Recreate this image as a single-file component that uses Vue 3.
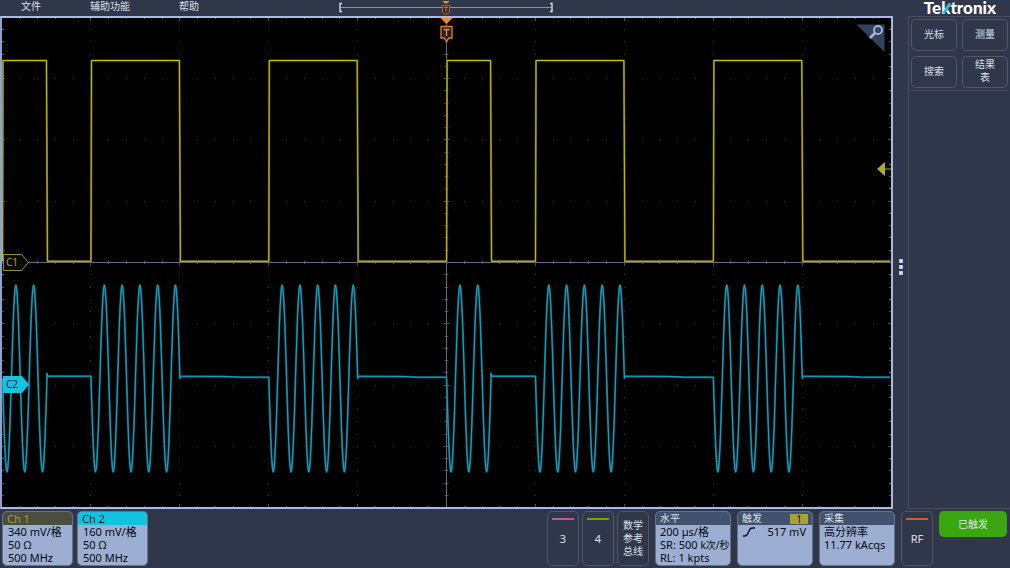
<script setup>
const DIV_X = 88.9
const DIV_Y = 61.3
const CX = 444.5
const CY = 244.5

const bursts = [
  { start: 0.5, cycles: 2.5 },
  { start: 89, cycles: 5 },
  { start: 266.8, cycles: 5 },
  { start: 444.6, cycles: 2.5 },
  { start: 533.5, cycles: 5 },
  { start: 711.4, cycles: 5 },
]

const PERIOD = 17.78
const HIGH = 42.5
const LOW = 243.3

let square = ''
let sine = ''
bursts.forEach((b, i) => {
  const end = b.start + b.cycles * PERIOD
  const next = i + 1 < bursts.length ? bursts[i + 1].start : 888
  square += `${i ? 'L' : 'M'}${b.start} ${LOW} L${b.start + 0.5} ${HIGH} L${end - 0.5} ${HIGH} L${end + 0.5} ${LOW} L${next} ${LOW} `
  const steps = b.cycles * 24
  for (let s = 0; s <= steps; s++) {
    const x = b.start + (s / steps) * b.cycles * PERIOD
    const y = 360.5 + 93.5 * Math.sin((s / 24) * Math.PI * 2)
    sine += `${i || s ? 'L' : 'M'}${x.toFixed(2)} ${y.toFixed(2)} `
  }
  const half = b.cycles < 5
  sine += half
    ? `L${end} 355.5 L${end + 0.6} 358.2 L${next} 358.2 `
    : `L${end} 360.5 L${end + 0.6} 358.2 L${end + 44} 358.4 L${end + 60} 359.2 L${next} 359.2 `
})

let dots = ''
for (let r = -3; r <= 3; r++) {
  if (r === 0) continue
  for (let c = -24; c <= 24; c++) {
    dots += `M${Math.round(CX + c * DIV_X / 5 - 0.5)} ${Math.round(CY + r * DIV_Y - 0.5) + 0.5}h1`
  }
}
for (let c = -4; c <= 4; c++) {
  if (c === 0) continue
  for (let r = -19; r <= 19; r++) {
    dots += `M${Math.round(CX + c * DIV_X - 0.5)} ${Math.round(CY + r * DIV_Y / 5 - 0.5) + 0.5}h1`
  }
}

let ticks = ''
for (let c = -24; c <= 24; c++) {
  const x = Math.round(CX + c * DIV_X / 5 - 0.5) + 0.5
  const l = c % 5 === 0 ? 3 : 1
  ticks += `M${x} 0v${l}M${x} ${CY - l - 0.5}v${2 * l + 1}M${x} 489v${-l}`
}
for (let r = -19; r <= 19; r++) {
  const y = Math.round(CY + r * DIV_Y / 5 - 0.5) + 0.5
  const l = r % 5 === 0 ? 3 : 2
  ticks += `M0 ${y}h${l}M${CX - l} ${y}h${2 * l}M889 ${y}h${-l}`
}

const tools = ['光标', '测量', '搜索', '结果表']
const channels = [
  { name: 'Ch 1', cls: 'ch1', lines: ['340 mV/格', '50 Ω', '500 MHz'] },
  { name: 'Ch 2', cls: 'ch2', lines: ['160 mV/格', '50 Ω', '500 MHz'] },
]
</script>

<template>
  <div class="app">
    <header class="top">
      <nav class="menu">
        <button>文件</button>
        <button>辅助功能</button>
        <button>帮助</button>
      </nav>
      <svg class="record" viewBox="0 0 216 16" aria-hidden="true">
        <path d="M2 7.500H214" stroke="#8490ad" />
        <path d="M4 3.500H2V11.500H4M212 3.500H214V11.500H212" fill="none" stroke="#dbe6fa" stroke-width="1.300" />
        <path d="M104 1H112L108 4Z" fill="#ff8a1c" />
        <path d="M104.500 5.500H111.500V12L108 14.500L104.500 12Z" fill="#332c35" stroke="#b96517" />
        <path d="M106 7.500H110M108 7.500V11.500" stroke="#dc791c" />
      </svg>
      <div class="logo">Te<span class="k">k<svg viewBox="0 0 10 16" aria-hidden="true"><path d="M7.500 3H10.500L4 13.500H1Z" fill="#16c1e8" /></svg></span>tronix</div>
    </header>

    <main class="main">
      <section class="scope">
        <svg class="plot" viewBox="0 0 889 489" preserveAspectRatio="none">
          <path :d="dots" stroke="#32343b" />
          <path :d="ticks" stroke="#4a4d5c" />
          <path d="M0 244.500H889M444.500 0V489" stroke="#666a85" />
          <path :d="square" class="trace yellow-glow" />
          <path :d="square" class="trace yellow" />
          <path :d="sine" class="trace cyan-glow" />
          <path :d="sine" class="trace cyan" />
        </svg>
        <svg class="trigger" viewBox="0 0 13 24" aria-hidden="true">
          <path d="M0.500 0H12.500L6.500 6Z" fill="#ff8a1c" />
          <path d="M1 8.500H12V20H9L6.500 23L4 20H1Z" fill="#241f2b" stroke="#e67d18" stroke-width="1.300" />
          <path d="M3.500 11.500H9.500M6.500 11.500V18" stroke="#f58b24" stroke-width="1.400" />
        </svg>
        <button class="zoom" aria-label="缩放">
          <svg viewBox="0 0 30 28" aria-hidden="true">
            <path d="M0.500 0.500H28.500V28Z" fill="#35415c" />
            <circle cx="22" cy="6" r="4" fill="none" stroke="#a5b7e0" stroke-width="1.800" />
            <path d="M19 9L14 14" stroke="#a5b7e0" stroke-width="2.600" />
          </svg>
        </button>
        <svg class="level" viewBox="0 0 14 14" aria-hidden="true">
          <path d="M0 7L8 0V14Z" fill="#b3a92c" />
          <path d="M7 7H14" stroke="#b3a92c" />
        </svg>
        <div class="tag c1">
          <svg viewBox="0 0 26 17" aria-hidden="true"><path d="M0.500 0.500H18.500L25.500 8.500L18.500 16.500H0.500Z" fill="#0b0b04" stroke="#989025" /></svg>
          <span>C1</span>
        </div>
        <div class="tag c2">
          <svg viewBox="0 0 26 17" aria-hidden="true"><path d="M0 0H19L26 8.500L19 17H0Z" fill="#13c3df" /></svg>
          <span>C2</span>
        </div>
      </section>
      <button class="handle" aria-label="面板"><i></i><i></i><i></i></button>
      <aside class="side">
        <div class="tools">
          <button v-for="t in tools" :key="t"><span>{{ t }}</span></button>
        </div>
      </aside>
    </main>

    <footer class="bottom">
      <button v-for="c in channels" :key="c.name" class="card channel" :class="c.cls">
        <span class="title">{{ c.name }}</span>
        <span v-for="l in c.lines" :key="l" class="line">{{ l }}</span>
      </button>
      <div class="right">
        <button class="slot"><i class="pink"></i>3</button>
        <button class="slot"><i class="green"></i>4</button>
        <button class="slot math">数学<br />参考<br />总线</button>
        <button class="card wide">
          <span class="title">水平</span>
          <span class="line">200 µs/格</span>
          <span class="line">SR: 500 <small>k次/秒</small></span>
          <span class="line">RL: 1 kpts</span>
        </button>
        <button class="card wide">
          <span class="title split">触发 <b>1</b></span>
          <span class="line split reading">
            <svg class="edge" viewBox="0 0 14 10" aria-hidden="true"><path d="M1 9H3C7 9 6 1 10 1H13" fill="none" stroke="#10131c" stroke-width="1.300" /></svg>
            517 mV
          </span>
        </button>
        <button class="card wide">
          <span class="title">采集</span>
          <span class="line">高分辨率</span>
          <span class="line">11.77 kAcqs</span>
        </button>
        <button class="slot rf"><i class="orange"></i>RF</button>
        <button class="status">已触发</button>
      </div>
    </footer>
  </div>
</template>

<style>
body {
  margin: 0;
  background: #31374a;
}
</style>

<style scoped>
.app {
  min-height: 100vh;
  display: grid;
  grid-template-rows: 16px 1fr 59px;
  background: #31374a;
  color: #dce0ea;
  font: 11px/13px "Noto Sans", "Noto Sans CJK SC", sans-serif;
}
button {
  box-sizing: border-box;
  margin: 0;
  padding: 0;
  border: 0;
  background: none;
  color: inherit;
  font: inherit;
}
.top {
  display: grid;
  grid-template-columns: 338px 216px 1fr;
  height: 16px;
}
.menu {
  display: flex;
  gap: 49px;
  padding-left: 21px;
  font-size: 10px;
}
.menu button {
  height: 13px;
}
.record {
  width: 216px;
  height: 16px;
}
.logo {
  justify-self: end;
  padding-right: 14px;
  color: #fff;
  font: 900 17px/15px Lato, sans-serif;
}
.k {
  position: relative;
}
.k svg {
  position: absolute;
  left: 0;
  top: 3px;
  width: 10px;
  height: 16px;
}
.main {
  display: grid;
  grid-template-columns: 1fr 15px 102px;
}
.scope {
  position: relative;
  min-height: 400px;
  border: 2px solid #a9bbe1;
  border-left-color: #8fa3cd;
  background: #000;
}
.plot {
  position: absolute;
  inset: 0;
  width: 100%;
  height: 100%;
}
.trace {
  fill: none;
  stroke-linejoin: round;
}
.yellow-glow {
  stroke: #6b6500;
  stroke-width: 2;
}
.yellow {
  stroke: #c6bb04;
  stroke-width: 1;
}
.cyan-glow {
  stroke: #065f72;
  stroke-width: 2;
}
.cyan {
  stroke: #08acca;
  stroke-width: 1;
}
.trigger {
  position: absolute;
  top: 0;
  left: 50%;
  width: 13px;
  height: 24px;
  margin-left: -7px;
}
.zoom {
  position: absolute;
  top: 6px;
  right: 5px;
  width: 30px;
  height: 28px;
}
.zoom svg {
  display: block;
}
.level {
  position: absolute;
  top: 31%;
  right: 0;
  width: 14px;
  height: 14px;
  margin-top: -8px;
}
.tag {
  position: absolute;
  left: 1px;
  width: 26px;
  height: 17px;
  margin-top: -9px;
  font-size: 10px;
  line-height: 16px;
}
.tag svg {
  position: absolute;
  inset: 0;
}
.tag span {
  position: relative;
  padding-left: 3px;
}
.c1 {
  top: 50%;
  color: #a79e28;
}
.c2 {
  top: 75%;
  color: #04222b;
}
.handle {
  display: flex;
  flex-direction: column;
  align-items: center;
  justify-content: center;
  gap: 2px;
  padding-top: 8px;
}
.handle i {
  width: 4px;
  height: 4px;
  border-radius: 1px;
  background: #c3d5f7;
}
.side {
  border: 1px solid #4b4d58;
  border-right: 0;
  padding: 2px;
}
.tools {
  display: grid;
  grid-template-columns: 1fr 1fr;
  gap: 5px;
  padding-bottom: 2px;
  border-bottom: 1px solid #484b57;
}
.tools button {
  height: 32px;
  padding-bottom: 2px;
  border: 1px solid #555863;
  border-radius: 5px;
  font-size: 10px;
}
.tools span {
  display: block;
  width: 20px;
  margin: 0 auto;
}
.bottom {
  display: flex;
  gap: 4px;
  padding: 2px 3px 2px 2px;
}
.right {
  display: flex;
  margin-left: auto;
}
.card {
  display: flex;
  flex-direction: column;
  height: 55px;
  overflow: hidden;
  border: 1px solid #65718f;
  border-radius: 5px;
  background: #9caed1;
  color: #080a10;
  text-align: left;
  white-space: nowrap;
}
.card .title {
  height: 13px;
  padding: 0 4px;
  background: #42516e;
  color: #dce0ea;
  font-size: 10px;
}
.card .line {
  height: 13px;
  padding-left: 5px;
}
.card small {
  font-size: 10px;
}
.channel {
  width: 71px;
}
.card.channel .title {
  font-size: 11px;
}
.card.ch1 .title {
  background: #4b4d40;
  color: #aaa128;
}
.card.ch2 .title {
  background: #12c3df;
  color: #071a22;
}
.wide {
  width: 76px;
  margin-right: 6px;
}
.card.wide .line {
  padding-left: 4px;
}
.card.wide .reading {
  padding-right: 6px;
}
.split {
  display: flex;
  justify-content: space-between;
  align-items: center;
}
.split b {
  width: 18px;
  height: 10px;
  background: #aaa32f;
  color: #10131c;
  font-weight: 400;
  line-height: 10px;
  text-align: center;
}
.edge {
  width: 14px;
  height: 10px;
}
.slot {
  position: relative;
  width: 32px;
  height: 55px;
  margin-right: 3px;
  padding-bottom: 1px;
  border: 1px solid #535762;
  border-radius: 5px;
}
.slot i {
  position: absolute;
  top: 6px;
  left: 4px;
  right: 4px;
  height: 2px;
}
.math {
  margin-right: 6px;
  font-size: 10px;
}
.rf {
  margin-right: 6px;
}
.pink {
  background: #c3588c;
}
.green {
  background: #76a300;
}
.orange {
  background: #c8622a;
}
.status {
  width: 68px;
  height: 26px;
  border-radius: 5px;
  background: #3aa710;
  font-size: 10px;
}
</style>
